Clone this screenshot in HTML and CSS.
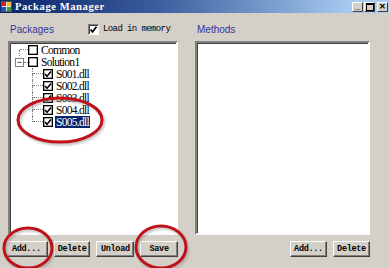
FILE: index.html
```html
<!DOCTYPE html>
<html lang="en">
<head>
  <meta charset="UTF-8" />
  <title>Package Manager</title>
  <link rel="stylesheet" href="styles.css">
</head>
<body>

  <div class="window">
    <div class="titlebar">
      <svg class="app-icon" width="11" height="11" viewBox="0 0 11 11">
        <rect x="0.5" y="0.5" width="10" height="10" fill="#e8e4dc" stroke="#555"/>
        <rect x="1" y="1" width="4" height="4" fill="#d02020"/>
        <rect x="6" y="1" width="4" height="4" fill="#f0c020"/>
        <rect x="1" y="6" width="4" height="4" fill="#2050c0"/>
        <rect x="6" y="6" width="4" height="4" fill="#30a040"/>
      </svg>
      <span class="title">Package Manager</span>
      <div class="caption-btns">
        <span class="cap-btn">_</span>
        <span class="cap-btn max"><i></i></span>
        <span class="cap-btn close">&#x2715;</span>
      </div>
    </div>

    <div class="content">
      <!-- packages side -->
      <div class="pane pane-left">
        <div class="pane-head">
          <span class="group-label">Packages</span>
          <span class="load">
            <span class="chk3d">
              <svg width="9" height="9" viewBox="0 0 9 9"><path d="M1.5 4.5 L3.5 6.8 L7.5 1.8" fill="none" stroke="#000" stroke-width="1.8"/></svg>
            </span>
            Load in memory
          </span>
        </div>

        <div class="listbox tree">
          <div class="row">
            <span class="gutter root first"><i></i><i></i><i></i><i></i></span>
            <span class="tchk"></span>
            <span class="node">Common</span>
          </div>
          <div class="row">
            <span class="gutter expander"><b>&minus;</b><em></em></span>
            <span class="tchk"></span>
            <span class="node">Solution1</span>
          </div>
          <div class="row">
            <span class="gutter blank"></span>
            <span class="gutter child"><i></i><i></i><i></i><i></i></span>
            <span class="tchk on"><svg width="8" height="8" viewBox="0 0 8 8"><path d="M1 4 L3 6.2 L7 1.5" fill="none" stroke="#000" stroke-width="1.6"/></svg></span>
            <span class="node">S001.dll</span>
          </div>
          <div class="row">
            <span class="gutter blank"></span>
            <span class="gutter child"><i></i><i></i><i></i><i></i></span>
            <span class="tchk on"><svg width="8" height="8" viewBox="0 0 8 8"><path d="M1 4 L3 6.2 L7 1.5" fill="none" stroke="#000" stroke-width="1.6"/></svg></span>
            <span class="node">S002.dll</span>
          </div>
          <div class="row">
            <span class="gutter blank"></span>
            <span class="gutter child"><i></i><i></i><i></i><i></i></span>
            <span class="tchk on"><svg width="8" height="8" viewBox="0 0 8 8"><path d="M1 4 L3 6.2 L7 1.5" fill="none" stroke="#000" stroke-width="1.6"/></svg></span>
            <span class="node">S003.dll</span>
          </div>
          <div class="row">
            <span class="gutter blank"></span>
            <span class="gutter child"><i></i><i></i><i></i><i></i></span>
            <span class="tchk on"><svg width="8" height="8" viewBox="0 0 8 8"><path d="M1 4 L3 6.2 L7 1.5" fill="none" stroke="#000" stroke-width="1.6"/></svg></span>
            <span class="node">S004.dll</span>
          </div>
          <div class="row">
            <span class="gutter blank"></span>
            <span class="gutter child last"><i></i><i></i><i></i><i></i></span>
            <span class="tchk on"><svg width="8" height="8" viewBox="0 0 8 8"><path d="M1 4 L3 6.2 L7 1.5" fill="none" stroke="#000" stroke-width="1.6"/></svg></span>
            <span class="node selected">S005.dll</span>
          </div>
        </div>

        <div class="btn-row">
          <button class="btn w-add">Add...</button>
          <button class="btn w-del">Delete</button>
          <button class="btn w-unl">Unload</button>
          <button class="btn w-save">Save</button>
        </div>
      </div>

      <!-- methods side -->
      <div class="pane pane-right">
        <div class="pane-head">
          <span class="group-label">Methods</span>
        </div>
        <div class="listbox"></div>
        <div class="btn-row right">
          <button class="btn w-del">Add...</button>
          <button class="btn w-del">Delete</button>
        </div>
      </div>
    </div>

    <!-- red annotation marks -->
    <svg class="marks" width="389" height="268" viewBox="0 0 389 268">
      <g class="shadow" fill="none" stroke="#7a7a7a" stroke-width="3" opacity="0.45" transform="translate(1.5,2)">
        <ellipse cx="60" cy="120" rx="42" ry="22"/>
        <ellipse cx="28" cy="248" rx="24" ry="20"/>
        <ellipse cx="161" cy="247" rx="25" ry="21"/>
      </g>
      <g fill="none" stroke="#c0101a" stroke-width="3">
        <ellipse cx="60" cy="120" rx="42" ry="22"/>
        <ellipse cx="28" cy="248" rx="24" ry="20"/>
        <ellipse cx="161" cy="247" rx="25" ry="21"/>
      </g>
    </svg>
  </div>

</body>
</html>
```

FILE: styles.css
```css
body {
  margin: 0;
  padding: 0;
  background: #d4d0c8;
}

.window {
  position: relative;
  width: 389px;
  height: 268px;
  background: #d4d0c8;
  overflow: hidden;
  font-family: 'Liberation Serif', serif;
}

/* title bar */
.titlebar {
  height: 13px;
  display: flex;
  align-items: center;
  background: linear-gradient(to right, #0a246a 0%, #3a5c9c 40%, #a6caf0 90%);
  color: white;
}

.app-icon {
  margin: 0 3px 0 1px;
  flex: none;
}

.title {
  font-weight: bold;
  font-size: 10.5px;
  letter-spacing: 0.6px;
  line-height: 13px;
}

.caption-btns {
  margin-left: auto;
  display: flex;
  gap: 1px;
  padding-right: 1px;
}

.cap-btn {
  width: 11px;
  height: 10px;
  background: #d4d0c8;
  border: 1px solid;
  border-color: #fff #404040 #404040 #fff;
  color: #000;
  font-family: 'Liberation Sans', sans-serif;
  font-weight: bold;
  font-size: 9px;
  line-height: 7px;
  text-align: center;
  box-sizing: border-box;
  display: flex;
  justify-content: center;
  align-items: center;
}

.cap-btn.max i {
  display: block;
  width: 6px;
  height: 5px;
  border: 1px solid #000;
  border-top-width: 2px;
}

.cap-btn.close {
  font-size: 8px;
  margin-left: 1px;
}

/* main area */
.content {
  display: flex;
  gap: 17px;
  padding-left: 8px;
}

.pane-left { width: 170px; }
.pane-right { width: 175px; }

.pane-head {
  height: 28px;
  display: flex;
  align-items: center;
  padding-top: 4px;
  box-sizing: border-box;
}

.group-label {
  width: 78px;
  padding-left: 2px;
  font-family: 'Liberation Sans', sans-serif;
  font-size: 10px;
  color: #33339a;
}

.load {
  display: flex;
  align-items: center;
  gap: 4px;
  font-family: 'Liberation Mono', monospace;
  font-size: 9px;
  letter-spacing: -0.6px;
  color: #000;
}

.chk3d {
  background: white;
  border: 1px solid;
  border-color: #808080 #fff #fff #808080;
  box-shadow: inset 1px 1px 0 #404040;
  display: flex;
  justify-content: center;
  align-items: center;
  box-sizing: border-box;
  width: 11px;
  height: 11px;
}

.listbox {
  height: 194px;
  background: white;
  border: 2px solid;
  border-color: #808080 #fff #fff #808080;
  box-shadow: inset 1px 1px 0 #404040;
  box-sizing: border-box;
}

/* tree view */
.tree {
  padding-top: 1px;
}

.row {
  display: flex;
  align-items: center;
  height: 12px;
}

.gutter {
  display: grid;
  height: 12px;
  flex: none;
}

.gutter i {
  display: block;
  border: 0 dotted #808080;
}

.gutter.root {
  width: 18px;
  grid-template-columns: 10px 8px;
  grid-template-rows: 6px 6px;
}

.gutter.root i:nth-child(2) { border-bottom-width: 1px; }
.gutter.root i:nth-child(3) { border-right-width: 1px; }

.gutter.expander {
  width: 18px;
  display: flex;
  align-items: center;
  padding-left: 5px;
  box-sizing: border-box;
}

.gutter.expander b {
  width: 9px;
  height: 9px;
  border: 1px solid #808080;
  box-sizing: border-box;
  font-family: 'Liberation Sans', sans-serif;
  font-weight: normal;
  font-size: 9px;
  line-height: 6px;
  text-align: center;
  color: #000;
  background: white;
}

.gutter.expander em {
  width: 4px;
  border-bottom: 1px dotted #808080;
}

.gutter.blank { width: 18px; }

.gutter.child {
  width: 15px;
  grid-template-columns: 5px 10px;
  grid-template-rows: 6px 6px;
}

.gutter.child i:nth-child(1) { border-right-width: 1px; }
.gutter.child i:nth-child(2) { border-bottom-width: 1px; }
.gutter.child i:nth-child(3) { border-right-width: 1px; }
.gutter.child.last i:nth-child(3) { border-right-width: 0; }

.tchk {
  width: 10px;
  height: 10px;
  border: 1px solid #000;
  box-shadow: inset 0 0 0 0.5px #555;
  background: white;
  box-sizing: border-box;
  display: flex;
  justify-content: center;
  align-items: center;
  flex: none;
}

.node {
  margin-left: 2px;
  padding: 0 1px;
  font-size: 11.5px;
  letter-spacing: -0.7px;
  line-height: 12px;
  color: #000;
}

.node.selected {
  background: #0a246a;
  color: white;
}

/* buttons */
.btn-row {
  display: flex;
  gap: 6px;
  margin-top: 6px;
  margin-left: -3px;
}

.btn-row.right {
  justify-content: flex-end;
  margin-left: 0;
}

.btn {
  height: 16px;
  padding: 0;
  background: #d4d0c8;
  border: 1px solid;
  border-color: #fff #404040 #404040 #fff;
  box-shadow: inset -1px -1px 0 #808080;
  font-family: 'Liberation Mono', monospace;
  font-weight: bold;
  font-size: 8.5px;
  letter-spacing: -0.3px;
  color: #000;
  cursor: pointer;
}

.w-add { width: 43px; }
.w-del { width: 37px; }
.w-unl { width: 38px; }
.w-save { width: 38px; }

/* annotation overlay */
.marks {
  position: absolute;
  top: 0;
  left: 0;
  pointer-events: none;
}

.marks .shadow {
  filter: blur(1px);
}
```
